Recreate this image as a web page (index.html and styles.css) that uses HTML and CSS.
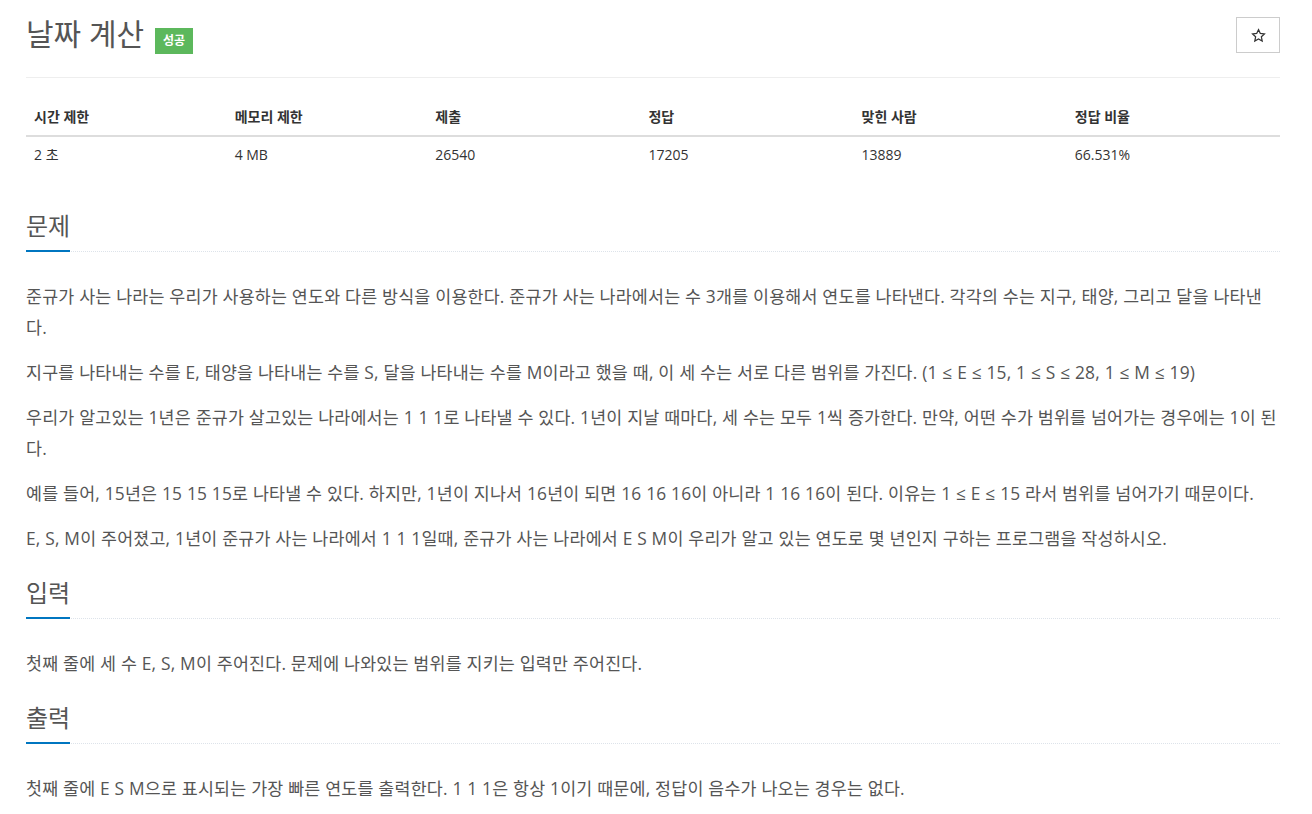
FILE: index.html
```html
<!DOCTYPE html>
<html lang="ko">

<head>
    <meta charset="UTF-8">
    <meta name="viewport" content="width=device-width, initial-scale=1.0">
    <title>날짜 계산</title>
    <link rel="stylesheet" href="styles.css">
</head>

<body>
    <div class="container">
        <div class="page-header">
            <h1 class="problem-title">
                날짜 계산
                <span class="label-ac">성공</span>
            </h1>
            <button class="btn-star" type="button" title="즐겨찾기">
                <svg width="15" height="15" viewBox="0 0 24 24">
                    <path d="M12 2.6l2.9 6.1 6.6.8-4.9 4.6 1.3 6.6L12 17.4l-5.9 3.3 1.3-6.6-4.9-4.6 6.6-.8z"
                        fill="none" stroke="#333" stroke-width="2" stroke-linejoin="miter" />
                </svg>
            </button>
        </div>

        <table class="problem-info">
            <thead>
                <tr>
                    <th class="col-a">시간 제한</th>
                    <th class="col-a">메모리 제한</th>
                    <th class="col-b">제출</th>
                    <th class="col-b">정답</th>
                    <th class="col-b">맞힌 사람</th>
                    <th class="col-b">정답 비율</th>
                </tr>
            </thead>
            <tbody>
                <tr>
                    <td>2 초</td>
                    <td>4 MB</td>
                    <td>26540</td>
                    <td>17205</td>
                    <td>13889</td>
                    <td>66.531%</td>
                </tr>
            </tbody>
        </table>

        <section class="problem-section">
            <div class="headline">
                <h2>문제</h2>
            </div>
            <div class="problem-text">
                <p>준규가 사는 나라는 우리가 사용하는 연도와 다른 방식을 이용한다. 준규가 사는 나라에서는 수 3개를 이용해서 연도를 나타낸다. 각각의 수는 지구, 태양, 그리고 달을 나타낸다.</p>
                <p>지구를 나타내는 수를 E, 태양을 나타내는 수를 S, 달을 나타내는 수를 M이라고 했을 때, 이 세 수는 서로 다른 범위를 가진다. (1 ≤ E ≤ 15, 1 ≤ S ≤ 28, 1 ≤ M ≤ 19)</p>
                <p>우리가 알고있는 1년은 준규가 살고있는 나라에서는 1 1 1로 나타낼 수 있다. 1년이 지날 때마다, 세 수는 모두 1씩 증가한다. 만약, 어떤 수가 범위를 넘어가는 경우에는 1이 된다.</p>
                <p>예를 들어, 15년은 15 15 15로 나타낼 수 있다. 하지만, 1년이 지나서 16년이 되면 16 16 16이 아니라 1 16 16이 된다. 이유는 1 ≤ E ≤ 15 라서 범위를 넘어가기 때문이다.</p>
                <p>E, S, M이 주어졌고, 1년이 준규가 사는 나라에서 1 1 1일때, 준규가 사는 나라에서 E S M이 우리가 알고 있는 연도로 몇 년인지 구하는 프로그램을 작성하시오.</p>
            </div>
        </section>

        <section class="problem-section">
            <div class="headline">
                <h2>입력</h2>
            </div>
            <div class="problem-text">
                <p>첫째 줄에 세 수 E, S, M이 주어진다. 문제에 나와있는 범위를 지키는 입력만 주어진다.</p>
            </div>
        </section>

        <section class="problem-section">
            <div class="headline">
                <h2>출력</h2>
            </div>
            <div class="problem-text">
                <p>첫째 줄에 E S M으로 표시되는 가장 빠른 연도를 출력한다. 1 1 1은 항상 1이기 때문에, 정답이 음수가 나오는 경우는 없다.</p>
            </div>
        </section>
    </div>
</body>

</html>
```

FILE: styles.css
```css
* {
    box-sizing: border-box;
}

body {
    margin: 0;
    font-family: 'Open Sans', 'Noto Sans CJK KR', sans-serif;
    font-size: 14px;
    color: #555;
    background-color: #fff;
}

.container {
    width: 1254px;
    margin-left: 26px;
}

.page-header {
    display: flex;
    justify-content: space-between;
    align-items: center;
    padding: 16px 0 23px;
    border-bottom: 1px solid #eee;
}

.problem-title {
    margin: 0;
    font-size: 30px;
    font-weight: 400;
    line-height: 36px;
    color: #555;
}

.label-ac {
    display: inline-block;
    margin-left: 3px;
    padding: 5px 8px;
    font-size: 12px;
    font-weight: 700;
    line-height: 16px;
    color: #fff;
    background-color: #5cb85c;
}

.btn-star {
    display: flex;
    align-items: center;
    justify-content: center;
    width: 44px;
    height: 36px;
    padding: 0;
    border: 1px solid #ccc;
    background-color: #fff;
}

.problem-info {
    width: 100%;
    margin: 21px 0 40px;
    border-collapse: collapse;
    color: #333;
}

.problem-info th,
.problem-info td {
    padding: 8px;
    line-height: 20px;
    text-align: left;
    font-size: 14px;
}

.problem-info th {
    font-weight: 700;
    border-bottom: 2px solid #ddd;
}

.col-a {
    width: 16%;
}

.col-b {
    width: 17%;
}

.headline {
    display: flex;
    margin: 26px 0 29px;
    border-bottom: 1px dotted #dde3ea;
}

.headline h2 {
    margin: 0 0 -1px;
    padding-bottom: 11px;
    font-size: 24px;
    font-weight: 400;
    line-height: 26px;
    color: #555;
    border-bottom: 2px solid #0076c0;
}

.problem-text {
    font-size: 17.35px;
    letter-spacing: 0.2px;
    word-break: break-all;
}

.problem-text p {
    margin: 0 0 14px;
    line-height: 31px;
}
```
